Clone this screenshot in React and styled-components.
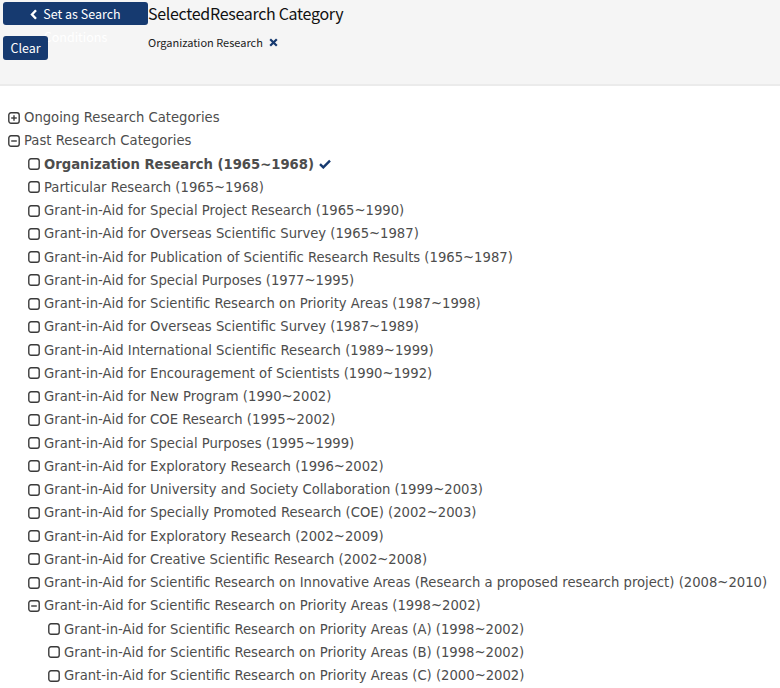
import React from "react";
import styled, { createGlobalStyle } from "styled-components";

const Global = createGlobalStyle`
  html, body { margin: 0; padding: 0; background: #fff; }
  body { font-family: "DejaVu Sans", sans-serif; }
`;

const Header = styled.div`
  display: flex;
  align-items: flex-start;
  height: 86px;
  background: #f5f5f5;
  border-bottom: 2px solid #ebebeb;
  box-sizing: border-box;
`;

const ButtonCol = styled.div`
  display: flex;
  flex-direction: column;
  align-items: flex-start;
  padding: 2px 0 0 3px;
  width: 145px;
  flex: none;
`;

const NavyButton = styled.button`
  background: #163a70;
  color: #fff;
  border: none;
  border-radius: 3px;
  font-family: "Noto Sans CJK JP", sans-serif;
  font-size: 12.5px;
  line-height: 22px;
  padding: 0 6px;
  cursor: pointer;
`;

const SetButton = styled(NavyButton)`
  width: 145px;
  height: 23px;
  overflow: visible;
  display: block;
  text-align: center;
  white-space: normal;
  line-height: 23px;
  padding: 0 22px;
`;

const ClearButton = styled(NavyButton)`
  margin-top: 11px;
  width: 45px;
  height: 24px;
  padding: 0;
`;

const InfoCol = styled.div`
  display: flex;
  flex-direction: column;
  padding-top: 2px;
`;

const Title = styled.div`
  font-family: "Noto Sans CJK JP", sans-serif;
  font-size: 16px;
  line-height: 22px;
  color: #111;
  letter-spacing: -0.3px;
`;

const Chip = styled.div`
  margin-top: 10px;
  display: flex;
  align-items: center;
  gap: 6px;
  font-family: "Noto Sans CJK JP", sans-serif;
  font-size: 11px;
  color: #222;
  line-height: 16px;
`;

const List = styled.ul`
  list-style: none;
  margin: 0;
  padding: 20px 0 0 0;
`;

const Row = styled.li`
  display: flex;
  align-items: center;
  height: 23.25px;
  padding-left: ${(p) => 8 + p.$level * 20}px;
  font-family: "DejaVu Sans", sans-serif;
  font-size: 13.2px;
  color: #4d4d4d;
  white-space: nowrap;
  font-weight: ${(p) => (p.$bold ? "bold" : "normal")};
`;

const IconBox = styled.span`
  display: inline-flex;
  width: 12px;
  height: 12px;
  margin-right: 4px;
  flex: none;
`;

const Square = ({ kind }) => (
  <IconBox>
    <svg width="12" height="12" viewBox="0 0 12 12">
      <rect x="0.8" y="0.8" width="10.4" height="10.4" rx="2.2" fill="none" stroke="#3a3a3a" strokeWidth="1.4" />
      {kind !== "box" && <line x1="3.2" y1="6" x2="8.8" y2="6" stroke="#3a3a3a" strokeWidth="1.4" />}
      {kind === "plus" && <line x1="6" y1="3.2" x2="6" y2="8.8" stroke="#3a3a3a" strokeWidth="1.4" />}
    </svg>
  </IconBox>
);

const Chevron = () => (
  <svg width="8" height="11" viewBox="0 0 8 11" style={{ marginRight: 5, verticalAlign: "-1px" }}>
    <path d="M6 1.2 L2 5.5 L6 9.8" fill="none" stroke="#fff" strokeWidth="2.4" />
  </svg>
);

const Check = () => (
  <svg width="12" height="10" viewBox="0 0 12 10" style={{ marginLeft: 5 }}>
    <path d="M1 5.2 L4.3 8.4 L11 1.6" fill="none" stroke="#163a70" strokeWidth="2.4" />
  </svg>
);

const Cross = () => (
  <svg width="9" height="9" viewBox="0 0 9 9">
    <path d="M1.2 1.2 L7.8 7.8 M7.8 1.2 L1.2 7.8" stroke="#163a70" strokeWidth="2.2" />
  </svg>
);

const items = [
  [1, "box", "Particular Research (1965~1968)"],
  [1, "box", "Grant-in-Aid for Special Project Research (1965~1990)"],
  [1, "box", "Grant-in-Aid for Overseas Scientific Survey (1965~1987)"],
  [1, "box", "Grant-in-Aid for Publication of Scientific Research Results (1965~1987)"],
  [1, "box", "Grant-in-Aid for Special Purposes (1977~1995)"],
  [1, "box", "Grant-in-Aid for Scientific Research on Priority Areas (1987~1998)"],
  [1, "box", "Grant-in-Aid for Overseas Scientific Survey (1987~1989)"],
  [1, "box", "Grant-in-Aid International Scientific Research (1989~1999)"],
  [1, "box", "Grant-in-Aid for Encouragement of Scientists (1990~1992)"],
  [1, "box", "Grant-in-Aid for New Program (1990~2002)"],
  [1, "box", "Grant-in-Aid for COE Research (1995~2002)"],
  [1, "box", "Grant-in-Aid for Special Purposes (1995~1999)"],
  [1, "box", "Grant-in-Aid for Exploratory Research (1996~2002)"],
  [1, "box", "Grant-in-Aid for University and Society Collaboration (1999~2003)"],
  [1, "box", "Grant-in-Aid for Specially Promoted Research (COE) (2002~2003)"],
  [1, "box", "Grant-in-Aid for Exploratory Research (2002~2009)"],
  [1, "box", "Grant-in-Aid for Creative Scientific Research (2002~2008)"],
  [1, "box", "Grant-in-Aid for Scientific Research on Innovative Areas (Research a proposed research project) (2008~2010)"],
  [1, "minus", "Grant-in-Aid for Scientific Research on Priority Areas (1998~2002)"],
  [2, "box", "Grant-in-Aid for Scientific Research on Priority Areas (A) (1998~2002)"],
  [2, "box", "Grant-in-Aid for Scientific Research on Priority Areas (B) (1998~2002)"],
  [2, "box", "Grant-in-Aid for Scientific Research on Priority Areas (C) (2000~2002)"],
];

export default function App() {
  return (
    <>
      <Global />
      <Header>
        <ButtonCol>
          <SetButton>
            <Chevron />Set as Search Conditions
          </SetButton>
          <ClearButton>Clear</ClearButton>
        </ButtonCol>
        <InfoCol>
          <Title>SelectedResearch Category</Title>
          <Chip>
            Organization Research <Cross />
          </Chip>
        </InfoCol>
      </Header>
      <List>
        <Row $level={0}>
          <Square kind="plus" />
          Ongoing Research Categories
        </Row>
        <Row $level={0}>
          <Square kind="minus" />
          Past Research Categories
        </Row>
        <Row $level={1} $bold>
          <Square kind="box" />
          Organization Research (1965~1968)
          <Check />
        </Row>
        {items.map(([lvl, kind, text], i) => (
          <Row key={i} $level={lvl}>
            <Square kind={kind} />
            {text}
          </Row>
        ))}
      </List>
    </>
  );
}
